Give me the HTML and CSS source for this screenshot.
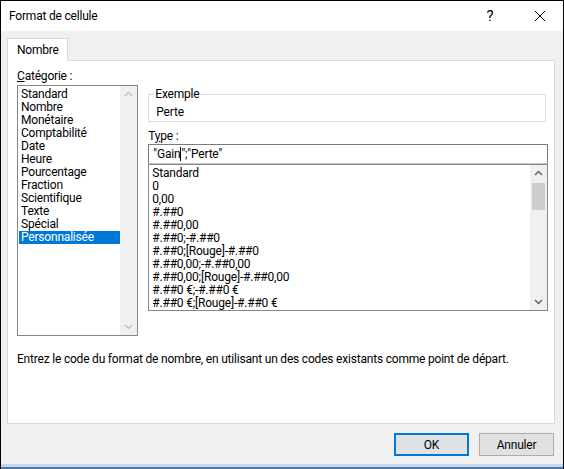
FILE: index.html
```html
<!DOCTYPE html>
<html lang="fr">
<head>
<meta charset="utf-8">
<title>Format de cellule</title>
<link rel="stylesheet" href="styles.css">
</head>
<body>
<div class="window">
  <div class="titlebar">
    <div class="title">Format de cellule</div>
    <div class="tb-btn help">?</div>
    <div class="tb-btn close">
      <svg width="12" height="12" viewBox="0 0 12 12"><path d="M1 1L11 11M11 1L1 11" stroke="#000" stroke-width="1" fill="none"/></svg>
    </div>
  </div>
  <div class="client">
    <div class="tabs"><div class="tab">Nombre</div></div>
    <div class="panel">
      <div class="columns">
        <div class="col-left">
          <div class="label"><u>C</u>atégorie :</div>
          <div class="listbox cat">
            <div class="items">
              <div class="item">Standard</div>
              <div class="item">Nombre</div>
              <div class="item">Monétaire</div>
              <div class="item">Comptabilité</div>
              <div class="item">Date</div>
              <div class="item">Heure</div>
              <div class="item">Pourcentage</div>
              <div class="item">Fraction</div>
              <div class="item">Scientifique</div>
              <div class="item">Texte</div>
              <div class="item">Spécial</div>
              <div class="item selected">Personnalisée</div>
            </div>
            <div class="vscroll disabled">
              <svg class="arrow" width="17" height="17" viewBox="0 0 17 17"><path d="M5 10L8.5 6.5L12 10" stroke="#c2c2c2" stroke-width="1.4" fill="none"/></svg>
              <div class="track"></div>
              <svg class="arrow" width="17" height="17" viewBox="0 0 17 17"><path d="M5 7L8.5 10.5L12 7" stroke="#c2c2c2" stroke-width="1.4" fill="none"/></svg>
            </div>
          </div>
        </div>
        <div class="col-right">
          <fieldset class="group">
            <legend>Exemple</legend>
            <div class="sample">Perte</div>
          </fieldset>
          <div class="label type-label">T<u>y</u>pe :</div>
          <div class="input">"Gain<span class="caret"></span>";"Perte"</div>
          <div class="listbox fmt">
            <div class="items">
              <div class="item">Standard</div>
              <div class="item">0</div>
              <div class="item">0,00</div>
              <div class="item">#.##0</div>
              <div class="item">#.##0,00</div>
              <div class="item">#.##0;-#.##0</div>
              <div class="item">#.##0;[Rouge]-#.##0</div>
              <div class="item">#.##0,00;-#.##0,00</div>
              <div class="item">#.##0,00;[Rouge]-#.##0,00</div>
              <div class="item">#.##0 €;-#.##0 €</div>
              <div class="item">#.##0 €;[Rouge]-#.##0 €</div>
            </div>
            <div class="vscroll">
              <svg class="arrow" width="17" height="17" viewBox="0 0 17 17"><path d="M5 10L8.5 6.5L12 10" stroke="#606060" stroke-width="1.4" fill="none"/></svg>
              <div class="track"><div class="thumb"></div></div>
              <svg class="arrow" width="17" height="17" viewBox="0 0 17 17"><path d="M5 7L8.5 10.5L12 7" stroke="#606060" stroke-width="1.4" fill="none"/></svg>
            </div>
          </div>
        </div>
      </div>
      <div class="desc">Entrez le code du format de nombre, en utilisant un des codes existants comme point de départ.</div>
    </div>
    <div class="footer">
      <div class="btn default">OK</div>
      <div class="btn">Annuler</div>
    </div>
  </div>
</div>
</body>
</html>
```
FILE: styles.css
```css
* { box-sizing: border-box; }
html, body { margin: 0; padding: 0; background: #ffffff; }
body {
  font-family: Roboto, "Noto Sans", sans-serif;
  font-size: 12px;
  letter-spacing: -0.2px;
  color: #000;
}
.window {
  width: 564px;
  height: 469px;
  border: 1px solid #000;
  border-bottom: none;
  display: flex;
  flex-direction: column;
  background: #f0f0f0;
}
.titlebar {
  height: 30px;
  background: #fff;
  display: flex;
  align-items: center;
  flex: none;
}
.title {
  flex: 1;
  padding-left: 8px;
  font-size: 12px;
  padding-bottom: 1px;
}
.tb-btn {
  width: 46px;
  height: 30px;
  display: flex;
  align-items: center;
  justify-content: center;
}
.help { font-size: 15px; margin-right: 4px; }
.close { margin-right: 0; }
.client {
  flex: 1;
  display: flex;
  flex-direction: column;
  padding: 7px 8px 0 6px;
  border-bottom: 2px solid #4a78a8;
  box-shadow: inset 0 -3px 0 #c5d7e8;
}
.tabs { height: 22px; display: flex; flex: none; }
.tab {
  width: 61px;
  height: 23px;
  background: #fff;
  border: 1px solid #d9d9d9;
  border-bottom: none;
  padding: 4px 0 0 9px;
  position: relative;
  z-index: 1;
}
.panel {
  height: 364px;
  flex: none;
  background: #fff;
  border: 1px solid #d9d9d9;
  padding: 7px 6px 0 9px;
}
.columns { display: flex; gap: 10px; }
.col-left { width: 122px; display: flex; flex-direction: column; }
.col-right { width: 402px; display: flex; flex-direction: column; }
.label { height: 16px; line-height: 16px; }
.col-left .label { margin-bottom: 1px; }
.listbox {
  display: flex;
  border: 1px solid #828790;
  background: #fff;
}
.items { flex: 1; padding-top: 2px; }
.item {
  height: 13px;
  line-height: 13px;
  padding-left: 3px;
  white-space: nowrap;
}
.cat { height: 251px; }
.cat .item.selected { background: #0078d7; color: #fff; margin-left: 1px; padding-left: 2px; }
.vscroll {
  width: 17px;
  background: #f0f0f0;
  display: flex;
  flex-direction: column;
}
.vscroll .arrow { display: block; flex: none; }
.track { flex: 1; padding: 1px 2px; }
.thumb { height: 27px; background: #cdcdcd; }
.group {
  margin: 19px 2px 0 0;
  padding: 3px 6px 4px 7px;
  border: 1px solid #dcdcdc;
  height: 35px;
}
.group legend {
  padding: 0 1px;
  margin-left: -2px;
  line-height: 14px;
}
.sample { line-height: 14px; margin-top: 1px; }
.type-label { margin-top: 6px; margin-bottom: 0; }
.input {
  height: 20px;
  border: 1px solid #7a7a7a;
  border-bottom-color: #c8c8c8;
  padding: 2px 0 0 4px;
  line-height: 15px;
  white-space: nowrap;
}
.caret {
  display: inline-block;
  width: 1px;
  height: 14px;
  background: #000;
  vertical-align: -3px;
}
.fmt { height: 147px; border-color: #828790; }
.desc { margin-top: 15px; line-height: 16px; white-space: nowrap; }
.footer {
  display: flex;
  justify-content: flex-end;
  gap: 10px;
  padding: 9px 1px 0 0;
}
.btn {
  width: 75px;
  height: 23px;
  background: #e1e1e1;
  border: 1px solid #adadad;
  display: flex;
  align-items: center;
  justify-content: center;
}
.btn.default { border: 2px solid #0078d7; }
```
